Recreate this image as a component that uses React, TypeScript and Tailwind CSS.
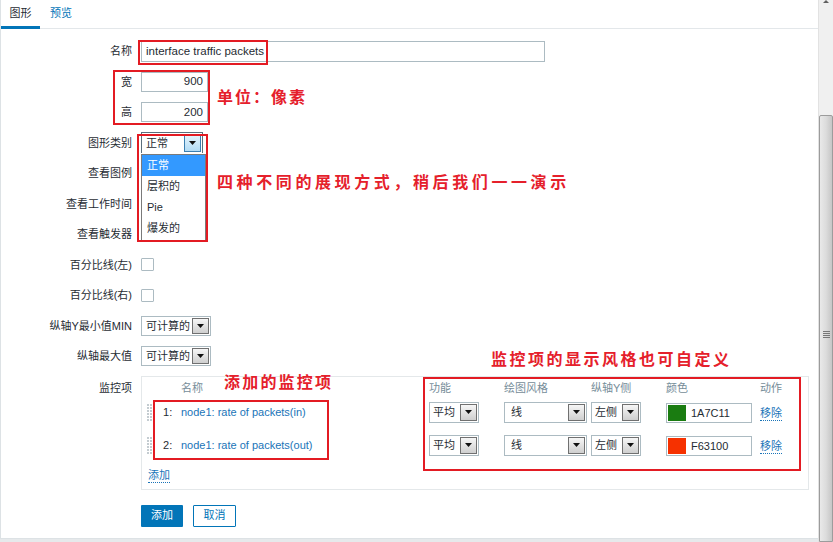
import React from 'react'

const ui = "font-['Liberation_Sans','Noto_Sans_CJK_SC',sans-serif]"
const note = "font-['Noto_Sans_CJK_SC',sans-serif] font-bold text-[#e5202b] text-[16px] leading-[20px]"

// small black arrow used by the classic select buttons
function Arrow() {
  return (
    <svg width="7" height="4" viewBox="0 0 7 4">
      <path d="M0 0h7L3.5 4z" fill="#111" />
    </svg>
  )
}

function Select({ value, className, text = 'pl-[3px]' }: { value: string; className: string; text?: string }) {
  return (
    <div className={`flex border border-[#acbbc2] bg-white ${className}`}>
      <div className={`flex-1 flex items-center text-[11px] text-[#1f2c33] whitespace-nowrap ${text}`}>{value}</div>
      <div className="w-[17px] shrink-0 m-[1px] flex items-center justify-center border border-[#707070] bg-gradient-to-b from-[#f6f6f6] to-[#cfcfcf]">
        <Arrow />
      </div>
    </div>
  )
}

function Checkbox() {
  return <div className="w-[13px] h-[13px] border border-[#acbbc2] bg-white rounded-[1px]" />
}

function Row({ label, children }: { label: string; children?: React.ReactNode }) {
  return (
    <div className="flex items-center h-[30.5px]">
      <div className="w-[131px] text-right text-[11px] text-[#1f2c33]">{label}</div>
      <div className="ml-[9px] flex items-center">{children}</div>
    </div>
  )
}

function Grip() {
  const dots = []
  for (let r = 0; r < 6; r++) {
    dots.push(<rect key={'a' + r} x="0" y={r * 3} width="2" height="2" fill="#c4ccd1" />)
    dots.push(<rect key={'b' + r} x="3" y={r * 3} width="2" height="2" fill="#c4ccd1" />)
  }
  return (
    <svg width="5" height="17" viewBox="0 0 5 17">
      {dots}
    </svg>
  )
}

interface Item {
  n: number
  name: string
  color: string
}

const items: Item[] = [
  { n: 1, name: 'node1: rate of packets(in)', color: '1A7C11' },
  { n: 2, name: 'node1: rate of packets(out)', color: 'F63100' },
]

function ItemsBox() {
  return (
    <div className="w-[668px] h-[114px] border border-[#e4e8ea] pl-[5px] pt-[5px]">
      <div className="flex h-[14px] items-center text-[11px] text-[#768d99]">
        <div className="w-[34px]" />
        <div className="w-[248px]">名称</div>
        <div className="w-[75px]">功能</div>
        <div className="w-[87px]">绘图风格</div>
        <div className="w-[75px]">纵轴Y侧</div>
        <div className="w-[94px]">颜色</div>
        <div>动作</div>
      </div>
      {items.map(it => (
        <div key={it.n} className="flex h-[33px] items-center text-[11px]">
          <div className="w-[16px] flex items-center">
            <Grip />
          </div>
          <div className="w-[18px] text-[#1f2c33]">{it.n}:</div>
          <div className="w-[248px] text-[#1a74b8]">{it.name}</div>
          <div className="w-[75px]">
            <Select value="平均" className="w-[50px] h-[21px]" />
          </div>
          <div className="w-[87px]">
            <Select value="线" className="w-[83px] h-[21px]" text="pl-[6px]" />
          </div>
          <div className="w-[75px]">
            <Select value="左侧" className="w-[50px] h-[21px]" />
          </div>
          <div className="w-[94px]">
            <div className="w-[86px] h-[20px] mt-[2px] border border-[#acbbc2] bg-white flex items-center">
              <div
                className="w-[18px] h-[16px] ml-[1px]"
                style={{ backgroundColor: '#' + it.color }}
              />
              <span className="ml-[5px] text-[#1f2c33]">{it.color}</span>
            </div>
          </div>
          <div className="mt-[2px] text-[#1a74b8] border-b border-dotted border-[#1a74b8] leading-[14px]">移除</div>
        </div>
      ))}
      <div className="mt-[5px] inline-block text-[11px] text-[#1a74b8] border-b border-dotted border-[#1a74b8] leading-[14px] ml-[1px]">
        添加
      </div>
    </div>
  )
}

function Scrollbar() {
  return (
    <div className="w-[15px] h-[542px] flex flex-col bg-[#f0f0f0] border-l border-[#e2e2e2]">
      <div className="h-[4px] flex justify-center">
        <div className="w-0 h-0 border-l-[3px] border-r-[3px] border-b-[3px] border-l-transparent border-r-transparent border-b-[#606060]" />
      </div>
      <div className="h-[111px]" />
      <div className="flex-1 border border-[#9c9c9c] rounded-t-[2px] bg-gradient-to-r from-[#e9e9e9] via-[#dcdcdc] to-[#c6c6c6] flex flex-col items-center pt-[215px]">
        <div className="w-[7px] h-[1px] bg-[#777]" />
        <div className="w-[7px] h-[1px] bg-[#777] mt-[1px]" />
        <div className="w-[7px] h-[1px] bg-[#777] mt-[1px]" />
        <div className="w-[7px] h-[1px] bg-[#777] mt-[1px]" />
      </div>
    </div>
  )
}

export default function App() {
  return (
    <div className={`w-[833px] h-[542px] flex overflow-hidden bg-[#e6e9eb] ${ui}`}>
      <div className="relative w-[818px] h-[539px] bg-white border-l border-b border-[#dde2e5]">
        {/* Tabs */}
        <div className="flex h-[29px] border-b border-[#e3e7ea]">
          <div className="h-[29px] w-[39px] flex items-center justify-center text-[11px] text-[#1f2c33] border-b-[3px] border-[#0275b8] pt-[1px]">
            图形
          </div>
          <div className="h-[29px] px-[10px] flex items-center text-[11px] text-[#0275b8] pb-[2px]">预览</div>
        </div>

        {/* Form */}
        <div className="pt-[7px]">
          <Row label="名称">
            <div className="w-[404px] h-[21px] border border-[#acbbc2] bg-white px-[4px] flex items-center text-[11.5px] text-[#1f2c33]">
              interface traffic packets
            </div>
          </Row>
          <Row label="宽">
            <div className="w-[67px] h-[20px] border border-[#acbbc2] bg-white pr-[4px] flex items-center justify-end text-[11.5px] text-[#1f2c33]">
              900
            </div>
          </Row>
          <Row label="高">
            <div className="w-[67px] h-[20px] border border-[#acbbc2] bg-white pr-[4px] flex items-center justify-end text-[11.5px] text-[#1f2c33]">
              200
            </div>
          </Row>
          <Row label="图形类别">
            <div className="w-[62px] h-[21px] flex border border-[#5b6f7c] border-b-0 bg-white mt-[-1px]">
              <div className="flex-1 pl-[4px] flex items-center text-[11px] text-[#1f2c33]">正常</div>
              <div className="w-[17px] m-[1px] flex items-center justify-center border border-[#3c7fb1] bg-gradient-to-b from-[#e5f4fc] to-[#b2dcf5]">
                <Arrow />
              </div>
            </div>
          </Row>
          <Row label="查看图例">
            <Checkbox />
          </Row>
          <Row label="查看工作时间">
            <Checkbox />
          </Row>
          <Row label="查看触发器">
            <Checkbox />
          </Row>
          <Row label="百分比线(左)">
            <Checkbox />
          </Row>
          <Row label="百分比线(右)">
            <Checkbox />
          </Row>
          <Row label="纵轴Y最小值MIN">
            <Select value="可计算的" className="w-[70px] h-[20px]" text="pl-[4px]" />
          </Row>
          <Row label="纵轴最大值">
            <Select value="可计算的" className="w-[70px] h-[20px]" text="pl-[4px]" />
          </Row>

          <div className="flex mt-[4px]">
            <div className="w-[131px] text-right text-[11px] text-[#1f2c33] pt-[4px]">监控项</div>
            <div className="ml-[9px]">
              <ItemsBox />
            </div>
          </div>

          <div className="flex gap-[10px] ml-[140px] mt-[15px]">
            <div className="w-[42px] h-[22px] bg-[#0275b8] text-white text-[11px] flex items-center justify-center rounded-[1px]">
              添加
            </div>
            <div className="w-[43px] h-[22px] border border-[#0275b8] bg-white text-[#0275b8] text-[11px] flex items-center justify-center rounded-[1px]">
              取消
            </div>
          </div>
        </div>

        {/* open dropdown list of 图形类别 */}
        <div className="absolute left-[140px] top-[154px] w-[65px] h-[87px] bg-white border border-[#7a7a7a] text-[11px] text-[#1f2c33]">
          <div className="h-[21px] bg-[#3399ff] text-white pl-[5px] flex items-center">正常</div>
          <div className="h-[21px] pl-[5px] flex items-center">层积的</div>
          <div className="h-[21px] pl-[5px] flex items-center">Pie</div>
          <div className="h-[21px] pl-[5px] flex items-center">爆发的</div>
        </div>

        {/* red annotation boxes */}
        <div className="absolute left-[137px] top-[40px] w-[130px] h-[25px] border-2 border-[#e31b23]" />
        <div className="absolute left-[112px] top-[70px] w-[97px] h-[55px] border-2 border-[#e31b23]" />
        <div className="absolute left-[136px] top-[134px] w-[71px] h-[108px] border-2 border-[#e31b23]" />
        <div className="absolute left-[152px] top-[400px] w-[176px] h-[60px] border-2 border-[#e31b23]" />
        <div className="absolute left-[422px] top-[377px] w-[378px] h-[94px] border-2 border-[#e31b23]" />

        {/* red annotation texts */}
        <div className={`absolute left-[216px] top-[86px] tracking-[2px] ${note}`}>单位：像素</div>
        <div className={`absolute left-[216px] top-[171px] tracking-[3.6px] ${note}`}>
          四种不同的展现方式，稍后我们一一演示
        </div>
        <div className={`absolute left-[223px] top-[371px] tracking-[2.2px] ${note}`}>添加的监控项</div>
        <div className={`absolute left-[490px] top-[348px] tracking-[2.5px] ${note}`}>
          监控项的显示风格也可自定义
        </div>
      </div>
      <Scrollbar />
    </div>
  )
}
